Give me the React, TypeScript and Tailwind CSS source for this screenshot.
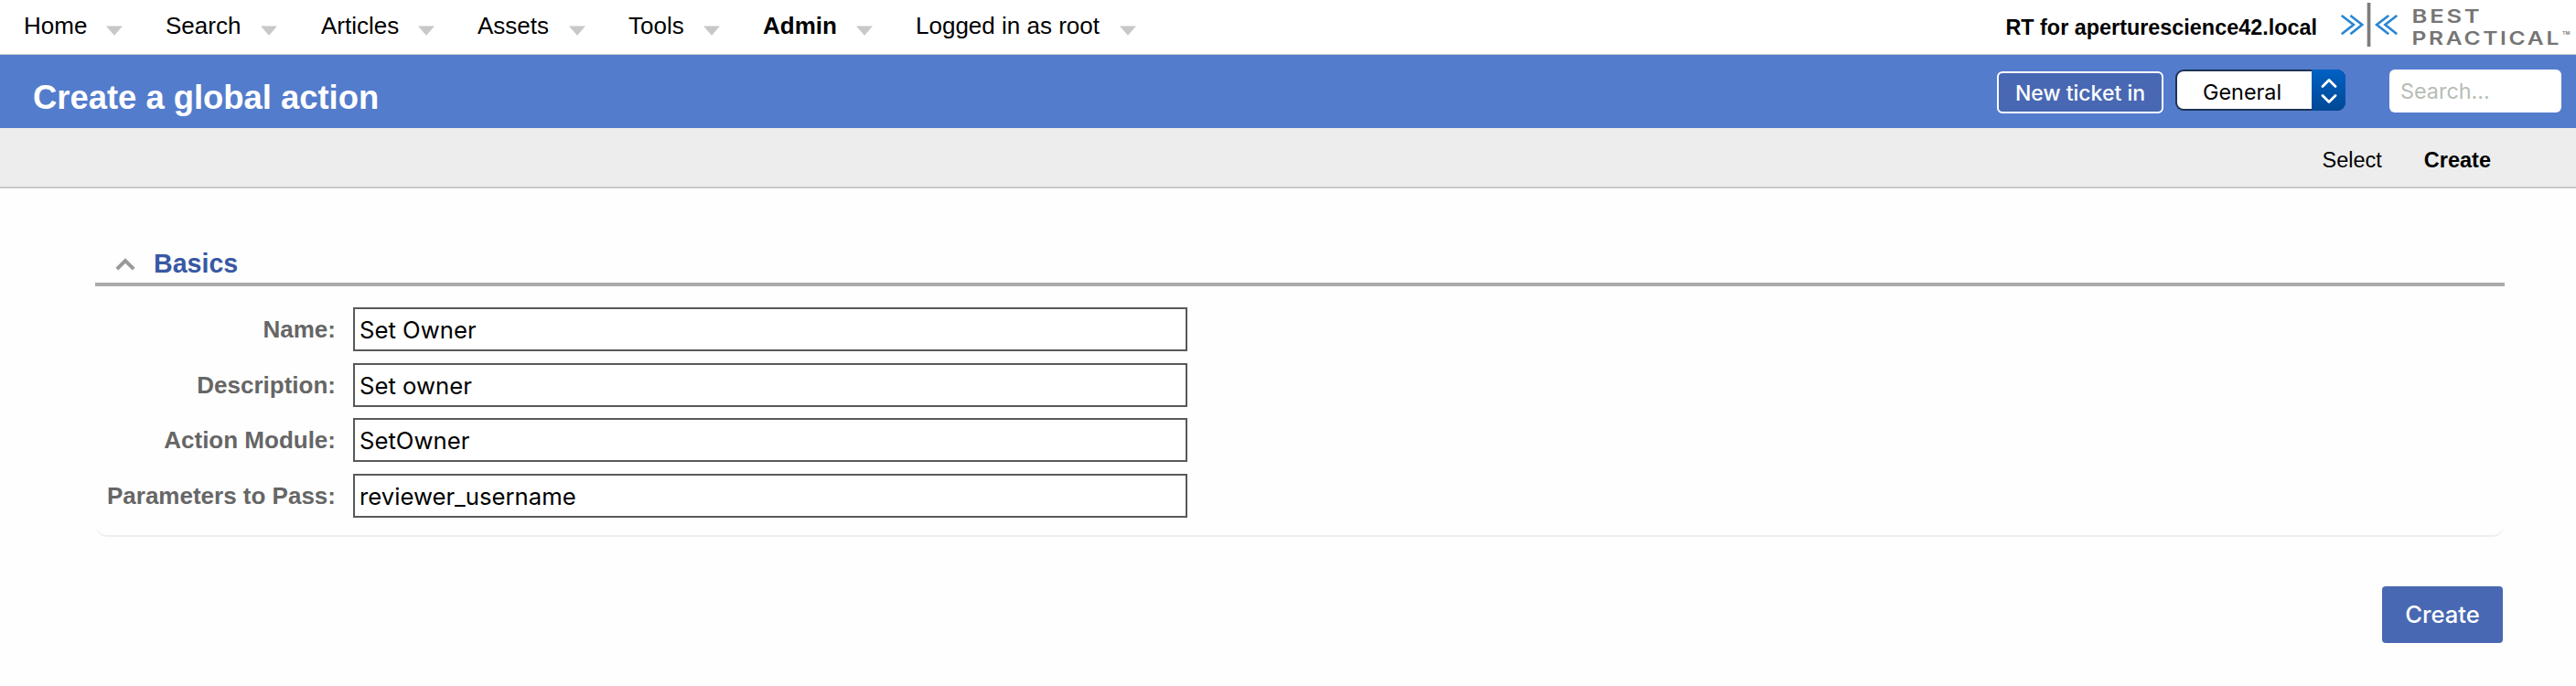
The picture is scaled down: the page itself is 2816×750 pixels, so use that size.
type NavItem = { label: string; width: string; margin: string; bold?: boolean };

const navItems: NavItem[] = [
  { label: "Home", width: "w-[108px]", margin: "ml-[26px]" },
  { label: "Search", width: "w-[122px]", margin: "ml-[47px]" },
  { label: "Articles", width: "w-[124px]", margin: "ml-[48px]" },
  { label: "Assets", width: "w-[118px]", margin: "ml-[47px]" },
  { label: "Tools", width: "w-[100px]", margin: "ml-[47px]" },
  { label: "Admin", width: "w-[120px]", margin: "ml-[47px]", bold: true },
  { label: "Logged in as root", width: "w-[241px]", margin: "ml-[47px]" },
];

const fields = [
  { label: "Name:", value: "Set Owner", margin: "mt-[23px]" },
  { label: "Description:", value: "Set owner", margin: "mt-[13px]" },
  { label: "Action Module:", value: "SetOwner", margin: "mt-[12px]" },
  { label: "Parameters to Pass:", value: "reviewer_username", margin: "mt-[13px]" },
];

function Caret() {
  return (
    <svg width="18" height="11" viewBox="0 0 18 11" className="mt-[28px] shrink-0">
      <path d="M0 0.5H18L9 10.8Z" fill="#c8c8c8" />
    </svg>
  );
}

function Logo() {
  return (
    <svg width="260" height="56" viewBox="0 0 260 56" className="shrink-0">
      <g fill="none" stroke="#2a86d1" strokeWidth="2.7">
        <path d="M3.8 17L16.8 27L3.8 37.3M13.4 17L26.2 27L13.4 37.3" />
        <path d="M55.2 17L42.2 27L55.2 37.3M64.2 17L51.4 27L64.2 37.3" />
      </g>
      <rect x="31.7" y="3" width="3.7" height="48" fill="#7d7d7d" />
      <g fill="#757575" fontFamily="Inter, sans-serif" fontWeight="600" fontSize="20">
        <text x="80.5" y="24.6" letterSpacing="2.2" textLength="77" lengthAdjust="spacingAndGlyphs">BEST</text>
        <text x="80.5" y="48.8" letterSpacing="2.2" textLength="163.5" lengthAdjust="spacingAndGlyphs">PRACTICAL</text>
        <text x="245" y="37.8" fontSize="5" textLength="8.5" lengthAdjust="spacingAndGlyphs">TM</text>
      </g>
    </svg>
  );
}

export default function App() {
  return (
    <div className="flex h-[750px] w-[2816px] flex-col bg-[#fefefe] font-['Liberation_Sans',sans-serif] text-black">
      <header className="flex h-[60px] shrink-0 border-b border-[#c6c6c6] bg-white">
        <nav className="flex">
          {navItems.map((item) => (
            <a
              key={item.label}
              className={`flex justify-between whitespace-nowrap text-[26px] leading-[56px] ${item.width} ${item.margin} ${item.bold ? "font-bold" : ""}`}
            >
              <span>{item.label}</span>
              <Caret />
            </a>
          ))}
        </nav>
        <div className="ml-auto flex">
          <span className="mr-[23px] whitespace-nowrap text-[23.4px] font-bold leading-[61px]">
            RT for aperturescience42.local
          </span>
          <Logo />
        </div>
      </header>

      <div className="flex h-20 shrink-0 items-start bg-[#547ccc] pr-4">
        <h1 className="ml-[36px] mr-auto text-[36.4px] font-bold leading-[93px] text-white">Create a global action</h1>
        <button className="mt-[18px] h-[46px] w-[182px] whitespace-nowrap rounded-[6px] border-2 border-white bg-[#4868b3] pt-px font-['Inter',sans-serif] text-[23px] font-medium leading-[42px] text-white">
          New ticket in
        </button>
        <div className="ml-[13px] mt-4 flex h-[45px] w-[186px] overflow-hidden rounded-[9px] bg-[#1d3354]">
          <div className="mb-[2px] ml-[2px] mt-[2px] h-[41px] w-[147px] rounded-l-[7px] bg-white pl-[28px] font-['Inter',sans-serif] text-[23.4px] leading-[45px]">
            General
          </div>
          <div className="flex h-[45px] w-[37px] items-center justify-center bg-linear-to-b from-[#0061c4] to-[#004894]">
            <svg width="20" height="30" viewBox="0 0 20 30" fill="none" stroke="#fff" strokeWidth="2.8" strokeLinecap="round" strokeLinejoin="round">
              <path d="M3 10.5L10 3.5L17 10.5M3 20.5L10 27.5L17 20.5" />
            </svg>
          </div>
        </div>
        <input
          placeholder="Search..."
          className="ml-12 mt-4 h-[47px] w-[188px] rounded-[6px] bg-white pl-3 font-['Inter',sans-serif] text-[23.4px] placeholder:text-[#b6bdb5]"
        />
      </div>

      <div className="flex h-[66px] shrink-0 justify-end gap-[46px] border-b-2 border-[#cacaca] bg-[#ededed] pr-[93px] text-[23.5px] leading-[70px]">
        <a>Select</a>
        <a className="font-bold">Create</a>
      </div>

      <main className="flex flex-col pl-[104px] pr-[78px]">
        <section className="h-[381px] rounded-b-[14px] border-b-2 border-[#eeeeee]">
          <div className="flex h-[107px] items-start border-b-4 border-[#aaaaaa]">
            <svg width="22" height="14" viewBox="0 0 22 14" className="ml-[22px] mt-[76px]">
              <path d="M1.8 12.2L11 3L20.2 12.2" fill="none" stroke="#999" strokeWidth="4" />
            </svg>
            <h2 className="ml-[20px] mt-[56px] text-[28.6px] font-bold leading-[52px] text-[#3858a3]">Basics</h2>
          </div>
          {fields.map((field) => (
            <label key={field.label} className={`flex h-12 ${field.margin}`}>
              <span className="w-[263px] whitespace-nowrap text-right text-[26px] font-bold leading-[48px] text-[#666]">
                {field.label}
              </span>
              <input
                defaultValue={field.value}
                className="ml-[19px] h-12 w-[912px] border-2 border-[#58595a] bg-white pl-[5px] pt-px font-['Inter',sans-serif] text-[25.7px]"
              />
            </label>
          ))}
        </section>
        <button className="mr-[2px] mt-[54px] h-[62px] w-[132px] self-end rounded-[4px] bg-[#4868b3] font-['Inter',sans-serif] text-[25.6px] font-medium leading-[62px] text-white">
          Create
        </button>
      </main>
    </div>
  );
}
